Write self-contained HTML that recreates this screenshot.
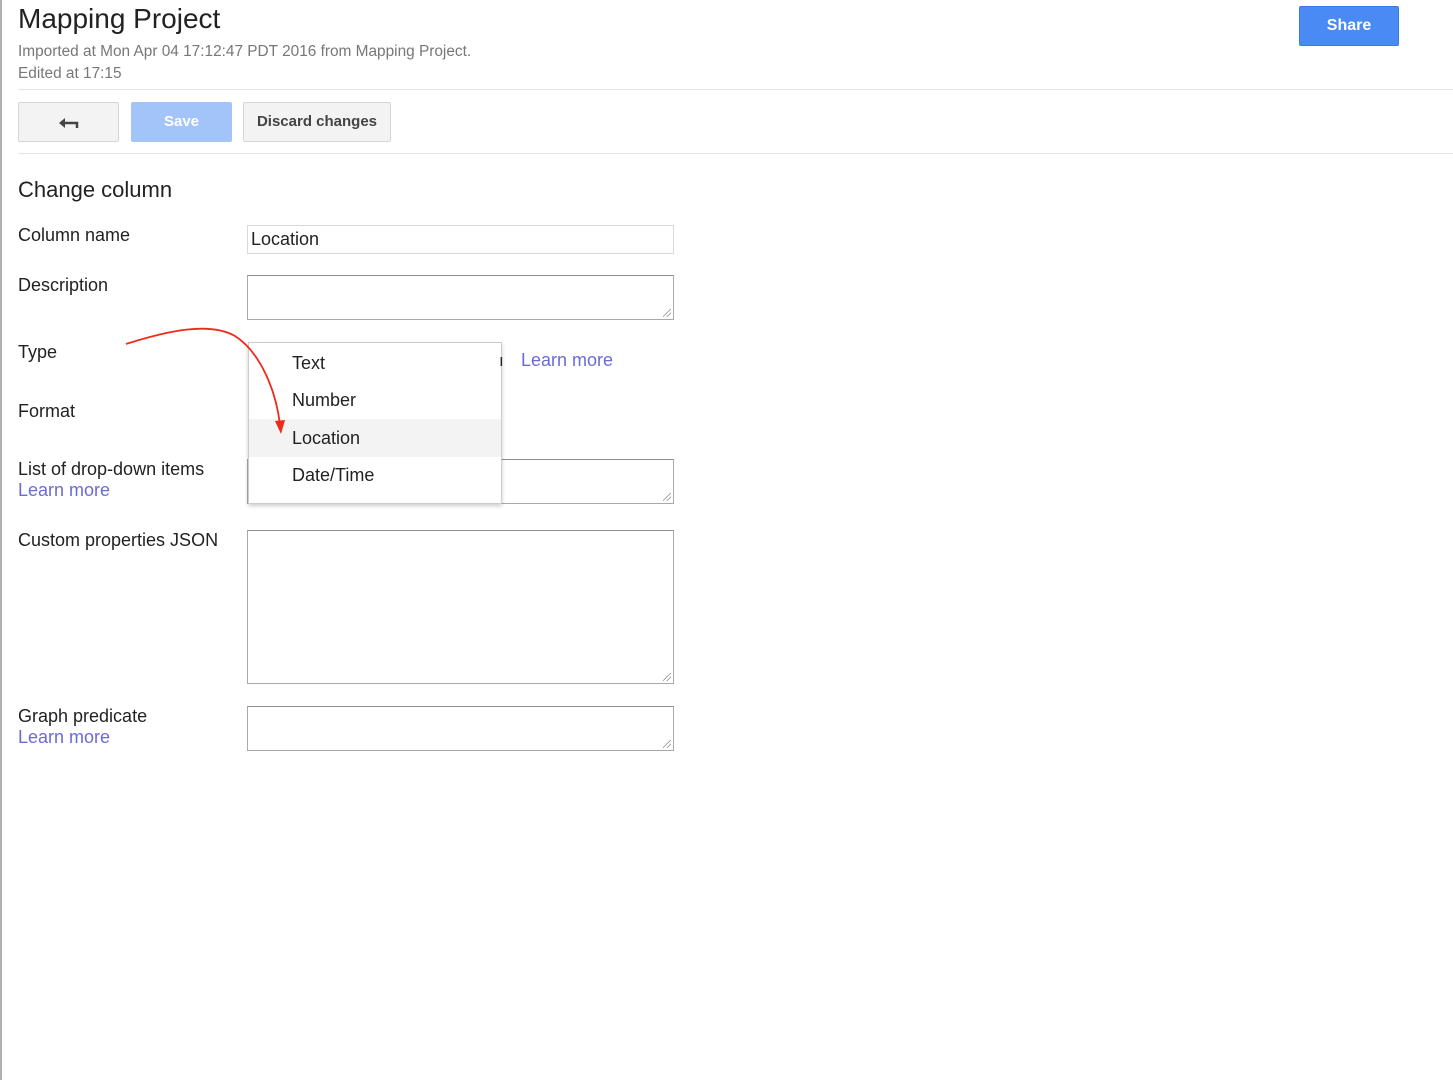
<!DOCTYPE html>
<html><head><style>
body{margin:0;width:1453px;height:1080px;background:#fff;font-family:"Liberation Sans",Arial,sans-serif;position:relative;overflow:hidden;color:#222}
.a{position:absolute;white-space:nowrap}
.lbl{font-size:18px;color:#222}
.link{color:#6b6bd6;font-size:18px}
.ta{position:absolute;border:1px solid #a9a9a9;border-top-color:#8e8e8e;background:#fff;box-sizing:border-box}
.ta:after{content:"";position:absolute;right:2px;bottom:2px;width:8px;height:8px;background:linear-gradient(135deg,transparent 45%,#888 45%,#888 52%,transparent 52%,transparent 70%,#888 70%,#888 77%,transparent 77%)}
.btn{position:absolute;box-sizing:border-box;border:1px solid #d6d6d6;background:#f3f3f3;border-radius:2px;font-weight:bold;font-size:15px;color:#444;text-align:center}
.opt{position:absolute;left:0;width:252px;height:38px;font-size:18px;line-height:38px;padding-left:43px;box-sizing:border-box;color:#222}
</style></head><body>
<div class="a" style="left:0;top:0;width:2px;height:1080px;background:#b0b0b0"></div>
<div class="a" style="left:18px;top:3px;font-size:28px;color:#222">Mapping Project</div>
<div class="a" style="left:18px;top:43px;font-size:15.4px;color:#777">Imported at Mon Apr 04 17:12:47 PDT 2016 from Mapping Project.</div>
<div class="a" style="left:18px;top:65px;font-size:15.4px;color:#777">Edited at 17:15</div>
<div class="a" style="left:1299px;top:6px;width:100px;height:40px;background:#4a8af4;border:1px solid #3b7be8;box-sizing:border-box;border-radius:2px;color:#fff;font-weight:bold;font-size:16px;text-align:center;line-height:38px">Share</div>
<div class="a" style="left:18px;top:89px;width:1435px;height:1px;background:#e5e5e5"></div>
<div class="btn" style="left:18px;top:102px;width:101px;height:40px;line-height:38px"><svg width="22" height="14" viewBox="0 0 22 14" style="margin-top:13px"><path d="M4 7H19V12" stroke="#444" stroke-width="2.5" fill="none"/><path d="M1 7L7 2V12Z" fill="#444"/></svg></div>
<div class="btn" style="left:131px;top:102px;width:101px;height:40px;line-height:38px;background:#a3c4f8;border-color:#a3c4f8;color:#fff">Save</div>
<div class="btn" style="left:243px;top:102px;width:148px;height:40px;line-height:38px">Discard changes</div>
<div class="a" style="left:18px;top:153px;width:1435px;height:1px;background:#e5e5e5"></div>
<div class="a" style="left:18px;top:177px;font-size:22px;color:#222">Change column</div>
<div class="a lbl" style="left:18px;top:225px">Column name</div>
<div class="a" style="left:247px;top:225px;width:427px;height:29px;border:1px solid #d9d9d9;box-sizing:border-box;font-size:18px;line-height:27px;padding-left:3px">Location</div>
<div class="a lbl" style="left:18px;top:275px">Description</div>
<div class="ta" style="left:247px;top:275px;width:427px;height:45px"></div>
<div class="a lbl" style="left:18px;top:342px">Type</div>
<div class="a link" style="left:521px;top:350px">Learn more</div>
<div class="a lbl" style="left:18px;top:401px">Format</div>
<div class="a lbl" style="left:18px;top:459px">List of drop-down items</div>
<div class="a link" style="left:18px;top:480px">Learn more</div>
<div class="ta" style="left:247px;top:459px;width:427px;height:45px"></div>
<div class="a lbl" style="left:18px;top:530px">Custom properties JSON</div>
<div class="ta" style="left:247px;top:530px;width:427px;height:154px"></div>
<div class="a lbl" style="left:18px;top:706px">Graph predicate</div>
<div class="a link" style="left:18px;top:727px">Learn more</div>
<div class="ta" style="left:247px;top:706px;width:427px;height:45px"></div>
<div class="a" style="left:248px;top:342px;width:254px;height:162px;background:#fff;border:1px solid #ccc;box-sizing:border-box;box-shadow:0 2px 4px rgba(0,0,0,.2)">
<div class="opt" style="top:1px">Text</div>
<div class="opt" style="top:38px">Number</div>
<div class="opt" style="top:76px;background:#f3f3f3">Location</div>
<div class="opt" style="top:113px">Date/Time</div>
</div>
<div class="a" style="left:499px;top:351px;font-size:17px">ı</div>
<svg class="a" style="left:0;top:0" width="400" height="460"><path d="M126 344C170 330 210 322 235 336C260 352 276 390 280 425" stroke="#f02a1a" stroke-width="1.8" fill="none"/><path d="M275 421L281 434L285 420Z" fill="#f02a1a"/></svg>
</body></html>
